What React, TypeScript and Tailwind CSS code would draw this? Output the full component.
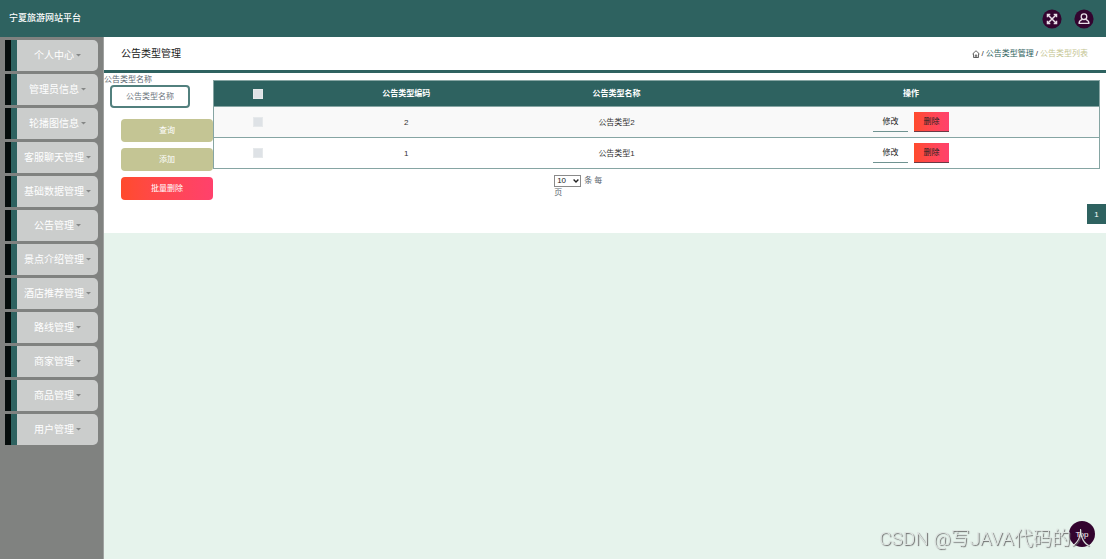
import React from 'react';

const menu = [
  '个人中心',
  '管理员信息',
  '轮播图信息',
  '客服聊天管理',
  '基础数据管理',
  '公告管理',
  '景点介绍管理',
  '酒店推荐管理',
  '路线管理',
  '商家管理',
  '商品管理',
  '用户管理',
];

const rows = [
  { code: 2, name: '公告类型2' },
  { code: 1, name: '公告类型1' },
];

const box = 'block mx-auto size-[10px] appearance-none border border-[#e6e9eb] bg-[#dee2e6]';

function ExpandIcon() {
  return (
    <svg viewBox="0 0 20 20" className="size-5" aria-hidden="true">
      <circle cx="10" cy="10" r="9.6" fill="#33042f" />
      <g stroke="#e9dfe8" strokeWidth="1.5" fill="none">
        <path d="M6 6l8 8M14 6l-8 8" />
        <path d="M5.500 8.300V5.500h2.800M11.700 5.500h2.800v2.800M14.500 11.700v2.800h-2.800M8.300 14.500H5.500v-2.800" />
      </g>
    </svg>
  );
}

function UserIcon() {
  return (
    <svg viewBox="0 0 20 20" className="size-5" aria-hidden="true">
      <circle cx="10" cy="10" r="9.6" fill="#33042f" />
      <g stroke="#e9dfe8" strokeWidth="1.3" fill="none" strokeLinejoin="round">
        <circle cx="10" cy="7.7" r="2.8" />
        <path d="M8.400 10.300c-2.200.6-3.300 1.800-3.400 4.000h10c-.1-2.200-1.200-3.400-3.400-4.000" />
      </g>
    </svg>
  );
}

function HomeIcon() {
  return (
    <svg viewBox="0 0 16 16" className="size-2" fill="none" stroke="#444" strokeWidth="1.6" aria-hidden="true">
      <path d="M1 8l7-6.500L15 8M3 7v8h10V7M6.500 15v-5h3v5" />
    </svg>
  );
}

export default function App() {
  return (
    <div className="flex min-h-screen flex-col bg-[#e6f3ec] font-['Liberation_Sans','Noto_Sans_CJK_SC',sans-serif] text-[8px] leading-[11px] text-[#5c6770]">
      <header className="flex h-[37px] items-center justify-between bg-[#2e6260] pr-3 pl-[9px]">
        <h1 className="text-[9px] font-medium text-white">宁夏旅游网站平台</h1>
        <div className="flex gap-3">
          <button aria-label="全屏"><ExpandIcon /></button>
          <button aria-label="个人中心"><UserIcon /></button>
        </div>
      </header>

      <div className="flex flex-1">
        <nav className="w-[104px] shrink-0 border-r border-[#a0a2a1] bg-[#808280] pt-[3px] pr-[5px] pl-[5px]">
          <ul className="flex flex-col gap-[3px]">
            {menu.map((label) => (
              <li key={label}>
                <a
                  href="#"
                  className="flex h-[31px] items-stretch overflow-hidden rounded-r-[5px] bg-[#cbcdcc] text-[10px] text-white"
                >
                  <span className="w-[6px] bg-[#060d0c]" />
                  <span className="w-[6px] bg-[#2e6260]" />
                  <span className="flex flex-1 items-center justify-center gap-[2px]">
                    {label}
                    <svg viewBox="0 0 5 3" className="h-[3px] w-[5px]" aria-hidden="true">
                      <path d="M0 0h5L2.500 2.500z" fill="#858786" />
                    </svg>
                  </span>
                </a>
              </li>
            ))}
          </ul>
        </nav>

        <main className="min-w-0 flex-1">
          <div className="flex h-9 items-center justify-between border-b-[3px] border-[#2e6260] bg-white pr-[18px] pl-[17px]">
            <h2 className="text-[10px] text-[#222]">公告类型管理</h2>
            <div className="flex items-center gap-[2px]">
              <HomeIcon />
              <span className="text-[#333]">/</span>
              <a href="#" className="text-[#2e6260]">公告类型管理</a>
              <span className="text-[#333]">/</span>
              <span className="text-[#c5c592]">公告类型列表</span>
            </div>
          </div>

          <section className="flex min-h-40 items-start bg-white">
            <form className="w-[109px] shrink-0 pt-px" onSubmit={(e) => e.preventDefault()}>
              <label htmlFor="type-name" className="block">公告类型名称</label>
              <input
                id="type-name"
                placeholder="公告类型名称"
                className="mb-[11px] ml-[6px] block h-[23px] w-[80px] rounded-[4px] border-2 border-[#52807e] bg-white px-[14px] text-[8px] outline-none placeholder:text-[#6c757d]"
              />
              <div className="flex flex-col gap-[6px] pl-[17px] text-white">
                <button className="h-[23px] rounded-[4px] bg-[#c4c594]">查询</button>
                <button className="h-[23px] rounded-[4px] bg-[#c4c594]">添加</button>
                <button className="h-[23px] rounded-[4px] bg-linear-to-r from-[#ff4b2b] to-[#ff416c]">批量删除</button>
              </div>
            </form>

            <div className="min-w-0 flex-1 pt-[7px]">
              <div className="pr-[6px]">
                <table className="w-full table-fixed border-collapse border border-[#86a5a3] text-center text-[#333]">
                  <colgroup>
                    <col className="w-[10%]" />
                    <col className="w-[23.5%]" />
                    <col className="w-[24%]" />
                    <col />
                  </colgroup>
                  <thead className="bg-[#2e6260] text-white">
                    <tr className="h-[26px]">
                      <th><input type="checkbox" aria-label="全选" className={box} /></th>
                      <th>公告类型编码</th>
                      <th>公告类型名称</th>
                      <th>操作</th>
                    </tr>
                  </thead>
                  <tbody>
                    {rows.map((row) => (
                      <tr key={row.code} className="h-[31px] border-t border-[#86a5a3] odd:bg-[#f9f9f9]">
                        <td><input type="checkbox" aria-label={row.name} className={box} /></td>
                        <td>{row.code}</td>
                        <td>{row.name}</td>
                        <td>
                          <div className="flex justify-center gap-[6px]">
                            <button className="h-5 w-[35px] border-b border-[#6f9391] text-[#222]">修改</button>
                            <button className="h-5 w-[35px] border-b border-[#6b3a45] bg-linear-to-r from-[#ff4b2b] to-[#ff416c] text-[#222]">
                              删除
                            </button>
                          </div>
                        </td>
                      </tr>
                    ))}
                  </tbody>
                </table>
              </div>
              <div className="mt-[6px] pl-[38.2%]">
                <label className="block w-[52px]">
                  <span className="mr-[3px] inline-grid items-center align-top">
                    <select className="col-start-1 row-start-1 h-[12px] w-[27px] appearance-none border border-[#8a8a8a] bg-white pl-[2px] text-[8px] leading-[10px] text-[#222]">
                      <option>10</option>
                      <option>25</option>
                      <option>50</option>
                    </select>
                    <svg viewBox="0 0 6 4" className="pointer-events-none col-start-1 row-start-1 mr-[2px] h-1 w-[6px] justify-self-end" fill="none" stroke="#222" strokeWidth="1.4" aria-hidden="true">
                      <path d="M.6.6L3 3 5.400.6" />
                    </svg>
                  </span>
                  条 每页
                </label>
              </div>
              <div className="mt-[6px] flex justify-end">
                <button className="h-5 w-[19px] bg-[#2e6260] text-white" aria-current="page">1</button>
              </div>
            </div>
          </section>
        </main>
      </div>

      <button className="fixed right-[11px] bottom-3 size-[26px] rounded-full bg-[#33042f] text-[8px] text-white">
        Top
      </button>
      <p className="pointer-events-none fixed right-4 bottom-2 font-['Roboto','Noto_Sans_CJK_SC',sans-serif] text-[19px] leading-6 font-light whitespace-nowrap text-[#dfe5e2] [text-shadow:1px_1px_1px_#666]">
        CSDN @写JAVA代码的人
      </p>
    </div>
  );
}
